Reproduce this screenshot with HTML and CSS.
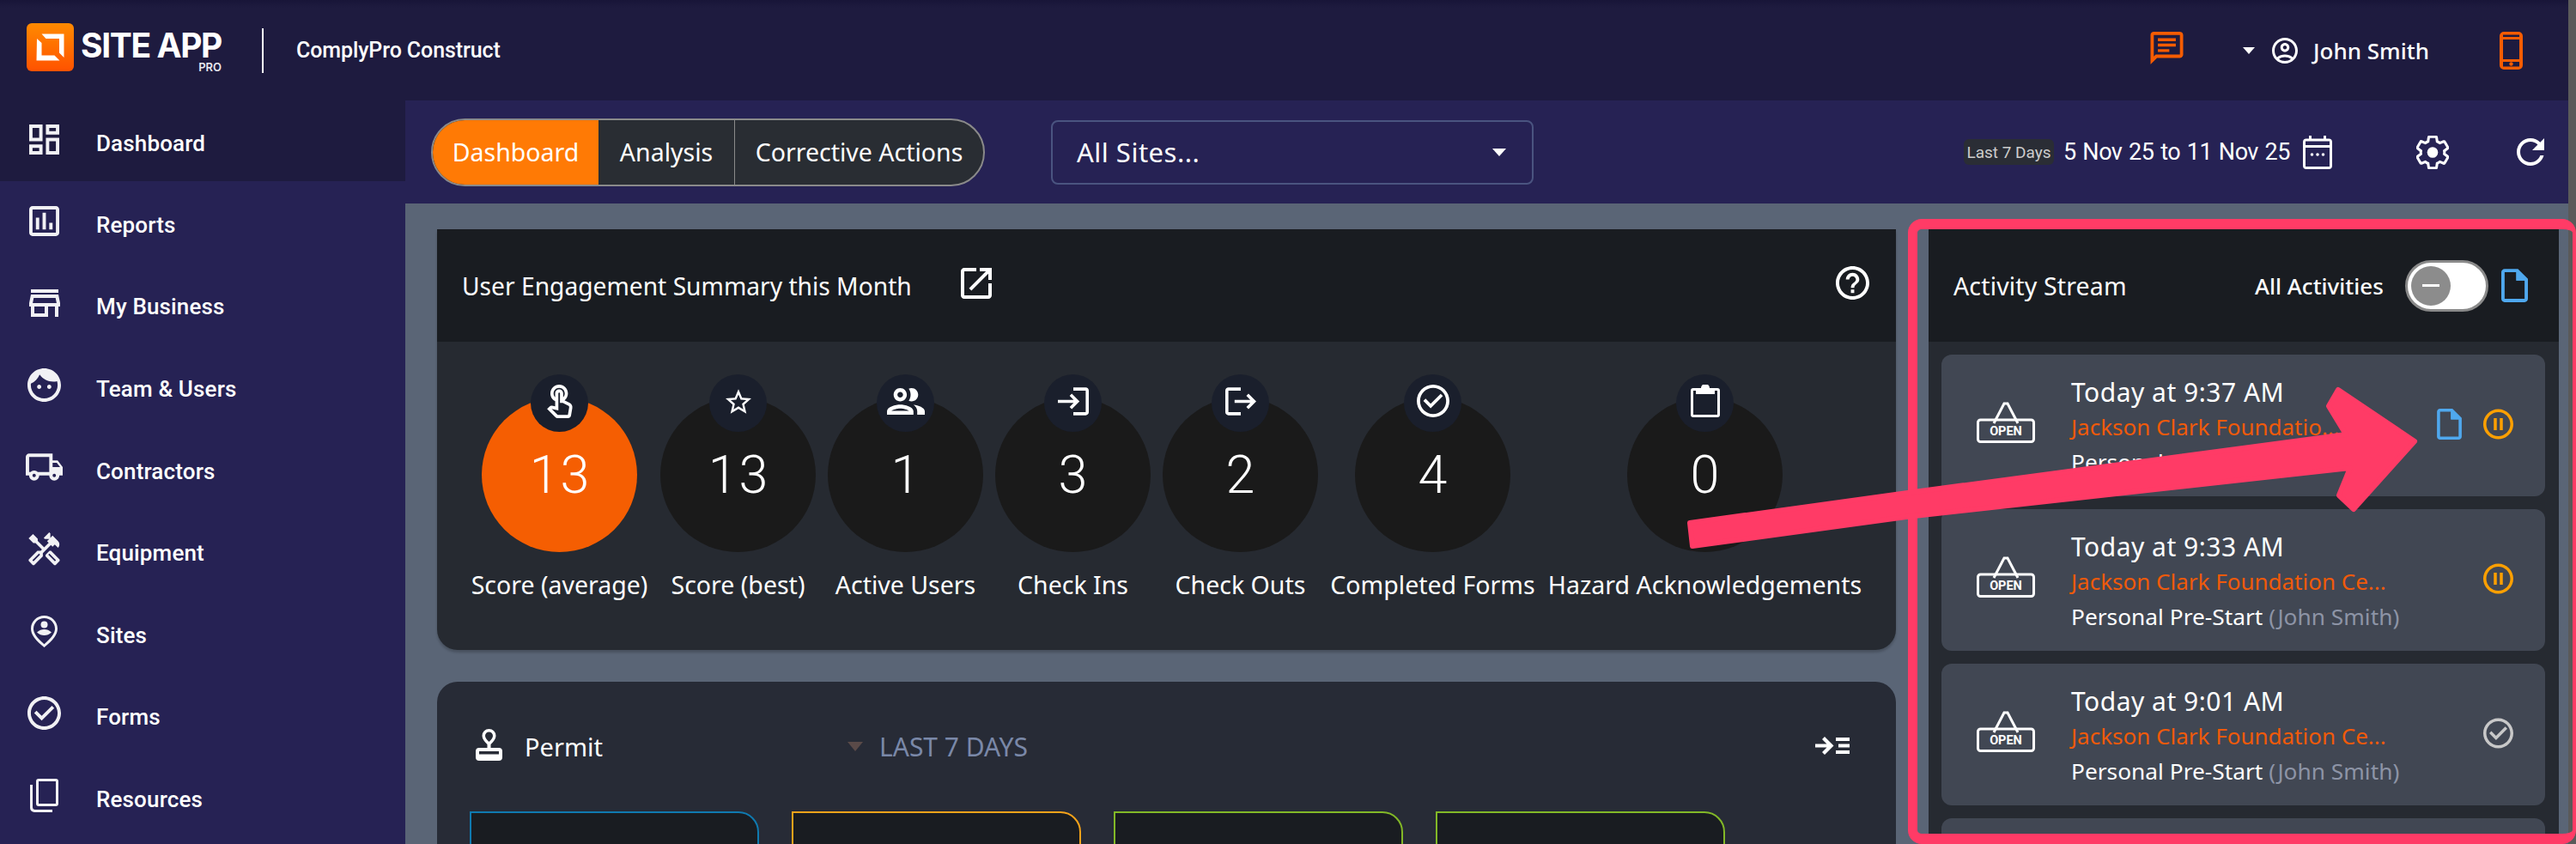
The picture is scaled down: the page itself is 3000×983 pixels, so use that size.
FILE: index.html
```html
<!DOCTYPE html>
<html lang="en">
<head>
<meta charset="utf-8">
<title>Site App Pro</title>
<link rel="stylesheet" href="styles.css">
</head>
<body>
<svg class="defs" width="0" height="0">
  <symbol id="doc" viewBox="4 2 16 20"><path d="M14 2H6c-1.1 0-1.99.9-1.99 2L4 20c0 1.1.89 2 1.99 2H18c1.1 0 2-.9 2-2V8l-6-6zM6 20V4h7v5h5v11H6z"/><path d="M13 3h1l5 5v1h-6z"/></symbol>
  <symbol id="pause" viewBox="2 2 20 20"><path d="M9 16h2V8H9v8zm3-14C6.48 2 2 6.48 2 12s4.48 10 10 10 10-4.48 10-10S17.52 2 12 2zm0 18c-4.41 0-8-3.59-8-8s3.59-8 8-8 8 3.59 8 8-3.59 8-8 8zm1-4h2V8h-2v8z"/></symbol>
  <symbol id="check" viewBox="2 2 20 20"><path d="M12 2C6.48 2 2 6.48 2 12s4.48 10 10 10 10-4.48 10-10S17.52 2 12 2zm0 18c-4.41 0-8-3.59-8-8s3.59-8 8-8 8 3.59 8 8-3.59 8-8 8z"/><path d="M16.6 8.6L10.5 14.7 7.4 11.6 6 13l4.5 4.5L18 10z" transform="translate(0 -1)"/></symbol>
</svg>

<div class="app">
  <header class="topbar">
    <svg class="logo-mark" viewBox="0 0 55 56">
      <defs><linearGradient id="lg" x1="0" y1="0" x2="0" y2="1"><stop offset="0" stop-color="#ff8a00"/><stop offset="1" stop-color="#ff5200"/></linearGradient></defs>
      <rect width="55" height="56" rx="6" fill="url(#lg)"/>
      <path d="M12 18l5.500 5v14.500h15l6 6H11.500z M17.500 12.500H43.500V40l-5.500-5.500V18H22.500z" fill="#fff"/>
    </svg>
    <div class="wordmark"><span class="wordmark-main">SITE APP</span><span class="wordmark-sub">PRO</span></div>
    <span class="top-divider"></span>
    <span class="company">ComplyPro Construct</span>
    <svg class="ic-chat" viewBox="2 2 20 20"><path d="M20 2H4c-1.100 0-2 .9-2 2v18l4-4h14c1.100 0 2-.9 2-2V4c0-1.100-.9-2-2-2zm0 14H5.170L4 17.170V4h16v12z"/><path d="M6.500 6h11v1.800h-11zM6.500 9.300h11v1.800h-11zM6.500 12.600h7v1.800h-7z"/></svg>
    <span class="top-caret"></span>
    <svg class="ic-user" viewBox="2 2 20 20"><path d="M12 2C6.480 2 2 6.480 2 12s4.480 10 10 10 10-4.480 10-10S17.520 2 12 2zM7.350 18.500C8.660 17.560 10.260 17 12 17s3.340.56 4.650 1.500c-1.310.94-2.910 1.500-4.650 1.500s-3.340-.56-4.650-1.500zm10.790-1.380C16.450 15.800 14.320 15 12 15s-4.450.8-6.140 2.120C4.700 15.730 4 13.950 4 12c0-4.420 3.580-8 8-8s8 3.580 8 8c0 1.950-.7 3.730-1.860 5.120z"/><path d="M12 6c-1.930 0-3.500 1.570-3.500 3.500S10.070 13 12 13s3.500-1.570 3.500-3.500S13.930 6 12 6zm0 5c-.83 0-1.500-.67-1.500-1.500S11.170 8 12 8s1.500.67 1.500 1.500S12.830 11 12 11z"/></svg>
    <span class="user-name">John Smith</span>
    <svg class="ic-phone" viewBox="0 0 27 44"><path fill-rule="evenodd" d="M5 0h17a5 5 0 015 5v34a5 5 0 01-5 5H5a5 5 0 01-5-5V5a5 5 0 015-5zM4 3.500V6h19V3.500zM4 9v23h19V9zM4 35v5.500h19V35z"/><circle cx="13.500" cy="37.500" r="2.200"/></svg>
  </header>

  <nav class="sidebar">
    <a class="nav-item active"><span class="nav-icon"><svg width="35" height="35" viewBox="3 3 18 18"><path d="M3 13h8V3H3v10zm2-8h4v6H5V5zm8 16h8V11h-8v10zm2-8h4v6h-4v-6zM13 3v6h8V3h-8zm6 4h-4V5h4v2zM3 21h8v-6H3v6zm2-4h4v2H5v-2z"/></svg></span>Dashboard</a>
    <a class="nav-item"><span class="nav-icon"><svg width="35" height="35" viewBox="3 3 18 18"><path d="M19 3H5c-1.100 0-2 .9-2 2v14c0 1.100.9 2 2 2h14c1.100 0 2-.9 2-2V5c0-1.100-.9-2-2-2zm0 16H5V5h14v14z"/><path d="M7 10h2v7H7zm4-3h2v10h-2zm4 6h2v4h-2z"/></svg></span>Reports</a>
    <a class="nav-item"><span class="nav-icon"><svg width="36" height="32" viewBox="3 4 18 16"><path d="M4 4h16v2H4zM21 14v-2l-1-5H4l-1 5v2h1v6h10v-6h4v6h2v-6h1zm-9 4H6v-4h6v4zm-6.960-6l.6-3h12.720l.6 3H5.040z"/></svg></span>My Business</a>
    <a class="nav-item"><span class="nav-icon"><svg width="39" height="39" viewBox="2 2 20 20"><path d="M9 11.750c-.69 0-1.250.56-1.250 1.250s.56 1.250 1.250 1.250 1.250-.56 1.250-1.250-.56-1.250-1.250-1.250zm6 0c-.69 0-1.250.56-1.250 1.250s.56 1.250 1.250 1.250 1.250-.56 1.250-1.250-.56-1.250-1.250-1.250zM12 2C6.480 2 2 6.480 2 12s4.480 10 10 10 10-4.480 10-10S17.520 2 12 2zm0 18c-4.410 0-8-3.590-8-8 0-.29.02-.58.05-.86 2.360-1.050 4.230-2.980 5.210-5.370C11.070 8.330 14.050 10 17.420 10c.78 0 1.530-.09 2.250-.26.21.71.33 1.470.33 2.260 0 4.410-3.590 8-8 8z"/></svg></span>Team &amp; Users</a>
    <a class="nav-item"><span class="nav-icon"><svg width="43" height="32" viewBox="1 4 22 16"><path d="M20 8h-3V4H3c-1.100 0-2 .9-2 2v11h2c0 1.660 1.340 3 3 3s3-1.340 3-3h6c0 1.660 1.340 3 3 3s3-1.340 3-3h2v-5l-3-4zm-.5 1.500l1.960 2.500H17V9.500h2.500zM6 18c-.55 0-1-.45-1-1s.45-1 1-1 1 .45 1 1-.45 1-1 1zm2.220-3c-.55-.61-1.330-1-2.220-1s-1.670.39-2.220 1H3V6h12v9H8.220zM18 18c-.55 0-1-.45-1-1s.45-1 1-1 1 .45 1 1-.45 1-1 1z"/></svg></span>Contractors</a>
    <a class="nav-item"><span class="nav-icon"><svg width="39" height="40" viewBox="2 1 20 22"><path d="M21.670 18.170l-5.300-5.300h-.99l-2.540 2.540v.99l5.300 5.300c.39.39 1.020.39 1.410 0l2.120-2.120c.39-.38.39-1.020 0-1.410zm-2.830 1.420l-4.240-4.240.71-.71 4.240 4.240-.71.71z"/><path d="M17.340 10.190l1.410-1.410 2.120 2.120c1.170-1.170 1.170-3.070 0-4.240l-3.540-3.540-1.410 1.410V1.710l-.7-.71-3.540 3.540.71.71h2.830l-1.410 1.410 1.060 1.060-2.890 2.890-4.130-4.130V5.060L4.830 2.040 2 4.870 5.030 7.900h1.410l4.130 4.130-.85.85H7.600l-5.300 5.300c-.39.39-.39 1.020 0 1.410l2.120 2.120c.39.39 1.020.39 1.410 0l5.300-5.300v-2.120l5.150-5.150 1.060 1.050zm-7.980 5.150l-4.240 4.240-.71-.71 4.240-4.240.71.71z"/></svg></span>Equipment</a>
    <a class="nav-item"><span class="nav-icon"><svg width="31" height="37" viewBox="0 0 31 37"><path fill-rule="evenodd" d="M15.500 0C7 0 0 6.700 0 15.200 0 22 5.500 29 15.500 37 25.500 29 31 22 31 15.200 31 6.700 24 0 15.500 0zm0 3C22.500 3 28 8.500 28 15.200c0 5-4 10.800-12.500 18C7 26 3 20.200 3 15.200 3 8.500 8.500 3 15.500 3z"/><circle cx="15.500" cy="10.500" r="4"/><path d="M7 19.500c2.500-2.500 5.500-3.500 8.500-3.500s6 1 8.500 3.500c-2.500 2.500-5.500 3.500-8.500 3.500S9.500 22 7 19.500z"/></svg></span>Sites</a>
    <a class="nav-item"><span class="nav-icon"><svg width="39" height="39"><use href="#check"/></svg></span>Forms</a>
    <a class="nav-item"><span class="nav-icon"><svg width="33" height="39" viewBox="0 0 33 39"><path fill-rule="evenodd" d="M10 0h20a3 3 0 013 3v26a3 3 0 01-3 3H10a3 3 0 01-3-3V3a3 3 0 013-3zm0 3v26h20V3z"/><path d="M0 7h3v26a3 3 0 003 3h20v3H5a5 5 0 01-5-5z"/></svg></span>Resources</a>
  </nav>

  <main class="main">
    <div class="toolbar">
      <div class="tabs">
        <span class="tab tab-active">Dashboard</span>
        <span class="tab tab-analysis">Analysis</span>
        <span class="tab tab-actions">Corrective Actions</span>
      </div>
      <div class="site-select"><span>All Sites...</span><span class="select-caret"></span></div>
      <span class="range-badge">Last 7 Days</span>
      <span class="range-text">5 Nov 25 to 11 Nov 25</span>
      <svg class="ic-cal" viewBox="0 0 34 39"><path fill-rule="evenodd" d="M7 0h3v3.500h14V0h3v3.500h3a4 4 0 014 4V35a4 4 0 01-4 4H4a4 4 0 01-4-4V7.500a4 4 0 014-4h3zM3 6.500V11h28V6.500zM3 14v22h28V14z"/><circle cx="10.500" cy="22" r="1.800"/><circle cx="17" cy="22" r="1.800"/><circle cx="23.500" cy="22" r="1.800"/></svg>
      <svg class="ic-gear" viewBox="2.500 1.800 19 20.400"><path fill="none" stroke="#fff" stroke-width="1.600" d="M19.140 12.940c.04-.3.06-.61.06-.94 0-.32-.02-.64-.07-.94l2.030-1.580c.18-.14.23-.41.12-.61l-1.920-3.320c-.12-.22-.37-.29-.59-.22l-2.390.96c-.5-.38-1.030-.7-1.620-.94l-.36-2.540c-.04-.24-.24-.41-.48-.41h-3.840c-.24 0-.43.17-.47.41l-.36 2.540c-.59.24-1.130.57-1.620.94l-2.390-.96c-.22-.08-.47 0-.59.22L2.740 8.870c-.12.21-.08.47.12.61l2.030 1.580c-.05.3-.09.63-.09.94s.02.64.07.94l-2.030 1.580c-.18.14-.23.41-.12.61l1.920 3.320c.12.22.37.29.59.22l2.390-.96c.5.38 1.030.7 1.620.94l.36 2.540c.05.24.24.41.48.41h3.840c.24 0 .44-.17.47-.41l.36-2.540c.59-.24 1.130-.56 1.620-.94l2.390.96c.22.08.47 0 .59-.22l1.920-3.320c.12-.22.07-.47-.12-.61l-2.010-1.580z"/><circle cx="12" cy="12" r="3.300" fill="#fff"/></svg>
      <svg class="ic-refresh" viewBox="4 4 16 16"><path d="M17.650 6.350C16.200 4.900 14.210 4 12 4c-4.420 0-7.990 3.580-7.990 8s3.570 8 7.990 8c3.730 0 6.840-2.550 7.730-6h-2.080c-.82 2.330-3.040 4-5.650 4-3.310 0-6-2.690-6-6s2.690-6 6-6c1.660 0 3.140.69 4.220 1.780L13 11h7V4l-2.350 2.350z"/></svg>
    </div>

    <div class="content">
      <div class="col-left">
        <section class="card summary">
          <div class="card-head">
            <span class="card-title">User Engagement Summary this Month</span>
            <svg class="ic-open" viewBox="3 3 18 18"><path d="M19 19H5V5h7V3H5c-1.110 0-2 .9-2 2v14c0 1.100.89 2 2 2h14c1.100 0 2-.9 2-2v-7h-2v7zM14 3v2h3.590l-9.830 9.830 1.410 1.410L19 6.410V10h2V3h-7z"/></svg>
            <svg class="ic-help" viewBox="2 2 20 20"><path d="M11 18h2v-2h-2v2zm1-16C6.480 2 2 6.480 2 12s4.480 10 10 10 10-4.480 10-10S17.520 2 12 2zm0 18c-4.410 0-8-3.590-8-8s3.590-8 8-8 8 3.590 8 8-3.590 8-8 8zm0-14c-2.210 0-4 1.790-4 4h2c0-1.100.9-2 2-2s2 .9 2 2c0 2-3 1.750-3 5h2c0-2.250 3-2.500 3-5 0-2.210-1.790-4-4-4z"/></svg>
          </div>
          <div class="stats">
            <div class="stat">
              <span class="stat-badge"><svg width="30" height="39" viewBox="4 1 16 21"><path d="M18.190 12.440l-3.240-1.620c1.290-1 2.120-2.560 2.120-4.320 0-3.030-2.470-5.500-5.500-5.500s-5.500 2.470-5.500 5.500c0 2.130 1.220 3.980 3 4.890v3.260c-2.150-.46-2.020-.44-2.260-.44-.53 0-1.030.21-1.410.59L4 16.220l5.090 5.090C9.520 21.750 10.120 22 10.740 22h6.300c.98 0 1.810-.7 1.970-1.670l.8-4.710c.22-1.300-.43-2.580-1.620-3.180zm-.35 2.850l-.8 4.710h-6.300c-.09 0-.17-.04-.24-.1l-3.680-3.680 4.250.89V6.500c0-.28.22-.5.5-.5s.5.22.5.5v6h1.760l3.460 1.730c.4.2.62.63.55 1.060zM8.070 6.500c0-1.930 1.570-3.500 3.500-3.500s3.500 1.570 3.500 3.500c0 .95-.38 1.810-1 2.440V6.500c0-1.380-1.120-2.500-2.500-2.500s-2.500 1.120-2.500 2.500v2.440c-.62-.63-1-1.490-1-2.440z"/></svg></span>
              <span class="stat-num stat-hot">13</span>
              <span class="stat-label">Score (average)</span>
            </div>
            <div class="stat">
              <span class="stat-badge"><svg width="30" height="29" viewBox="2 2 20 19"><path d="M22 9.240l-7.190-.62L12 2 9.190 8.630 2 9.240l5.460 4.730L5.820 21 12 17.270 18.180 21l-1.630-7.030L22 9.240zM12 15.400l-3.760 2.270 1-4.280-3.320-2.880 4.380-.38L12 6.100l1.710 4.040 4.380.38-3.320 2.880 1 4.280L12 15.400z"/></svg></span>
              <span class="stat-num">13</span>
              <span class="stat-label">Score (best)</span>
            </div>
            <div class="stat">
              <span class="stat-badge"><svg width="44" height="31" viewBox="2 5 20 14"><path d="M9 13.750c-2.340 0-7 1.170-7 3.500V19h14v-1.750c0-2.330-4.660-3.500-7-3.500zM4.340 17c.84-.58 2.870-1.250 4.660-1.250s3.820.67 4.660 1.250H4.340zM9 12c1.930 0 3.500-1.570 3.500-3.500S10.930 5 9 5 5.500 6.570 5.500 8.500 7.070 12 9 12zm0-5c.83 0 1.500.67 1.500 1.500S9.830 10 9 10s-1.500-.67-1.500-1.500S8.170 7 9 7zm7.040 6.810c1.160.84 1.960 1.960 1.960 3.440V19h4v-1.750c0-2.020-3.500-3.170-5.960-3.440zM15 12c1.930 0 3.500-1.570 3.500-3.500S16.930 5 15 5c-.54 0-1.040.13-1.500.35.63.89 1 1.980 1 3.150s-.37 2.260-1 3.150c.46.22.96.35 1.500.35z"/></svg></span>
              <span class="stat-num">1</span>
              <span class="stat-label">Active Users</span>
            </div>
            <div class="stat">
              <span class="stat-badge"><svg width="36" height="33" viewBox="2 3 20 18"><path d="M11 7L9.600 8.400l2.600 2.600H2v2h10.200l-2.600 2.600L11 17l5-5-5-5zm9 12h-8v2h8c1.100 0 2-.9 2-2V5c0-1.100-.9-2-2-2h-8v2h8v14z"/></svg></span>
              <span class="stat-num">3</span>
              <span class="stat-label">Check Ins</span>
            </div>
            <div class="stat">
              <span class="stat-badge"><svg width="36" height="33" viewBox="2 3 20 18"><path d="M17 7l-1.410 1.410L18.170 11H8v2h10.170l-2.580 2.580L17 17l5-5zM4 5h8V3H4c-1.100 0-2 .9-2 2v14c0 1.100.9 2 2 2h8v-2H4V5z"/></svg></span>
              <span class="stat-num">2</span>
              <span class="stat-label">Check Outs</span>
            </div>
            <div class="stat">
              <span class="stat-badge"><svg width="38" height="38"><use href="#check"/></svg></span>
              <span class="stat-num">4</span>
              <span class="stat-label">Completed Forms</span>
            </div>
            <div class="stat">
              <span class="stat-badge"><svg width="34" height="38" viewBox="0 0 34 38"><path fill-rule="evenodd" d="M3 4h9a5 5 0 0110 0h9a3 3 0 013 3v28a3 3 0 01-3 3H3a3 3 0 01-3-3V7a3 3 0 013-3zm0 3v28h28V7h-3v4H6V7z"/></svg></span>
              <span class="stat-num">0</span>
              <span class="stat-label">Hazard Acknowledgements</span>
            </div>
          </div>
        </section>

        <section class="card permit">
          <div class="permit-head">
            <svg class="ic-stamp" viewBox="0 0 31 37"><path fill-rule="evenodd" d="M15.500 0a8 8 0 018 8c0 3.500-2.500 6.500-6 10v4H27a4 4 0 014 4v7a4 4 0 01-4 4H4a4 4 0 01-4-4v-7a4 4 0 014-4h9.500v-4C10 14.500 7.500 11.500 7.500 8a8 8 0 018-8zm0 3.500a4.500 4.500 0 00-4.500 4.500c0 2 1.500 4 4.500 7 3-3 4.500-5 4.500-7a4.500 4.500 0 00-4.500-4.500zM4 26v3.500h23V26z"/></svg>
            <span class="permit-title">Permit</span>
            <span class="range-caret"></span>
            <span class="range-label">LAST 7 DAYS</span>
            <svg class="ic-indent" viewBox="0 0 40 21"><path d="M11 0l-3 3 5.500 5.500H0v4h13.500L8 18l3 3 10.500-10.500zM24 1h16v4H24zM27 8.500h13v4H27zM24 16h16v4H24z"/></svg>
          </div>
          <div class="tiles">
            <div class="tile tile-blue"></div>
            <div class="tile tile-amber"></div>
            <div class="tile tile-green"></div>
            <div class="tile tile-green"></div>
          </div>
        </section>
      </div>

      <aside class="stream">
        <div class="stream-head">
          <span class="stream-title">Activity Stream</span>
          <span class="stream-filter">All Activities</span>
          <span class="toggle"><span class="knob"><span class="knob-dash"></span></span></span>
          <svg class="ic-doc ic-doc-head"><use href="#doc"/></svg>
        </div>
        <div class="stream-list">
          <article class="activity">
            <svg class="open-sign" viewBox="0 0 68 49"><path d="M20 26L32 3h4l12 23" fill="none" stroke="#fff" stroke-width="3"/><rect x="1.500" y="22" width="65" height="25.500" rx="3" fill="none" stroke="#fff" stroke-width="3"/><text x="34" y="40" text-anchor="middle" class="open-text">OPEN</text></svg>
            <div class="activity-text">
              <div class="activity-time">Today at 9:37 AM</div>
              <div class="activity-site">Jackson Clark Foundatio...</div>
              <div class="activity-form">Personal Pre-Start <span class="activity-user">(John S...</span></div>
            </div>
            <div class="activity-icons">
              <svg class="ic-doc"><use href="#doc"/></svg>
              <svg class="ic-pause"><use href="#pause"/></svg>
            </div>
          </article>
          <article class="activity">
            <svg class="open-sign" viewBox="0 0 68 49"><path d="M20 26L32 3h4l12 23" fill="none" stroke="#fff" stroke-width="3"/><rect x="1.500" y="22" width="65" height="25.500" rx="3" fill="none" stroke="#fff" stroke-width="3"/><text x="34" y="40" text-anchor="middle" class="open-text">OPEN</text></svg>
            <div class="activity-text">
              <div class="activity-time">Today at 9:33 AM</div>
              <div class="activity-site">Jackson Clark Foundation Ce...</div>
              <div class="activity-form">Personal Pre-Start <span class="activity-user">(John Smith)</span></div>
            </div>
            <div class="activity-icons">
              <svg class="ic-pause"><use href="#pause"/></svg>
            </div>
          </article>
          <article class="activity">
            <svg class="open-sign" viewBox="0 0 68 49"><path d="M20 26L32 3h4l12 23" fill="none" stroke="#fff" stroke-width="3"/><rect x="1.500" y="22" width="65" height="25.500" rx="3" fill="none" stroke="#fff" stroke-width="3"/><text x="34" y="40" text-anchor="middle" class="open-text">OPEN</text></svg>
            <div class="activity-text">
              <div class="activity-time">Today at 9:01 AM</div>
              <div class="activity-site">Jackson Clark Foundation Ce...</div>
              <div class="activity-form">Personal Pre-Start <span class="activity-user">(John Smith)</span></div>
            </div>
            <div class="activity-icons">
              <svg class="ic-done"><use href="#check"/></svg>
            </div>
          </article>
          <article class="activity"></article>
        </div>
      </aside>
    </div>
  </main>
</div>

<div class="annot-frame"></div>
<svg class="annot-arrow" viewBox="0 0 3000 983"><path d="M1968 609L2229 573 2732 506 2712 473 2723 454 2812 514 2741 593 2724 577 2737 545 2220 602 1971 636z"/></svg>
</body>
</html>
```
FILE: styles.css
```css
* { box-sizing: border-box; }
html, body { margin: 0; height: 983px; overflow: hidden; }
body {
  position: relative;
  background: #5a5a5a;
  font-family: Roboto, "Liberation Sans", sans-serif;
  color: #fff;
}
svg { fill: #fff; flex: none; display: block; }
.defs { position: absolute; }

.app {
  width: 2991px;
  height: 983px;
  display: grid;
  grid-template-columns: 472px 1fr;
  grid-template-rows: 117px 866px;
}

/* top bar */
.topbar {
  grid-column: 1 / 3;
  display: flex;
  align-items: center;
  padding: 0 53px 0 31px;
  background: linear-gradient(#181538 0, #1e1b3f 9px);
}
.logo-mark { width: 55px; height: 56px; margin-top: -8px; }
.wordmark { display: flex; flex-direction: column; align-items: flex-end; margin-left: 8px; width: 164px; margin-top: 3px; }
.wordmark-main { font: 700 39px/34px Inter, sans-serif; letter-spacing: -1.400px; white-space: nowrap; }
.wordmark-sub { font: 600 13px/13px Inter, sans-serif; color: #e8e8ee; margin-top: 2px; }
.top-divider { width: 2px; height: 52px; background: #fff; margin-left: 47px; }
.company { font-size: 25px; font-weight: 500; margin-left: 38px; letter-spacing: -.1px; white-space: nowrap; }
.ic-chat { width: 39px; height: 38px; fill: #f65c02; margin-left: auto; margin-top: -5px; }
.top-caret { width: 0; height: 0; border: 7px solid transparent; border-top: 8px solid #fff; border-bottom: 0; margin-left: 69px; }
.ic-user { width: 30px; height: 30px; margin-left: 20px; }
.user-name { font: 500 26px "Noto Sans", sans-serif; margin-left: 18px; width: 135px; white-space: nowrap; }
.ic-phone { width: 27px; height: 44px; fill: #f65c02; margin-left: 82px; }

/* sidebar */
.sidebar { background: #262254; display: flex; flex-direction: column; }
.nav-item {
  height: 95.600px;
  padding-top: 6px;
  display: flex;
  align-items: center;
  font-size: 26px;
  font-weight: 500;
  letter-spacing: .15px;
}
.nav-item.active { height: 94px; background: #1e1b3f; }
.nav-icon { width: 103px; margin-right: 9px; display: flex; justify-content: center; margin-bottom: 9px; }
.nav-icon svg { fill: #f1f1f4; }

/* main */
.main { display: flex; flex-direction: column; min-width: 0; background: #5a6576; overflow: hidden; }
.toolbar {
  height: 120px;
  flex: none;
  display: flex;
  align-items: center;
  padding: 0 28px 0 30px;
  background: #262254;
}
.tabs {
  display: flex;
  width: 645px;
  height: 79px;
  border: 2px solid #8a8a8a;
  border-radius: 40px;
  overflow: hidden;
  background: #292d33;
  font: 400 28.500px "Noto Sans", sans-serif;
}
.tab { display: flex; align-items: center; justify-content: center; white-space: nowrap; }
.tab-active { width: 193px; background: #ff7a05; }
.tab-analysis { width: 158px; }
.tab-actions { flex: 1; border-left: 1px solid #8a8a8a; }
.site-select {
  width: 562px;
  height: 75px;
  margin-left: 77px;
  padding: 0 30px 0 28px;
  display: flex;
  align-items: center;
  justify-content: space-between;
  border: 2px solid #4a5480;
  border-radius: 8px;
  font: 400 31px "Noto Sans", sans-serif;
  letter-spacing: .5px;
}
.select-caret { width: 0; height: 0; border: 8px solid transparent; border-top: 9px solid #fff; border-bottom: 0; }
.range-badge {
  margin-left: auto;
  width: 105px;
  height: 30px;
  display: flex;
  align-items: center;
  justify-content: center;
  background: #2a2d35;
  border-radius: 6px;
  color: #ccc;
  font-size: 19px;
  white-space: nowrap;
}
.range-text { font-size: 27px; letter-spacing: -.5px; word-spacing: 1.500px; margin-left: 11px; width: 263px; white-space: nowrap; }
.ic-cal { width: 34px; height: 39px; margin-left: 16px; }
.ic-gear { width: 38px; height: 39px; margin-left: 98px; }
.ic-refresh { width: 32px; height: 32px; margin-left: 79px; }

.content { flex: 1; min-height: 0; display: flex; gap: 38px; padding: 30px 11px 0 37px; }
.col-left { width: 1699px; flex: none; display: flex; flex-direction: column; gap: 37px; }
.card { background: #262a31; }
.summary { height: 490px; flex: none; border-radius: 0 0 24px 24px; box-shadow: 0 3px 3px rgba(0,0,0,.2); }
.card-head { height: 131px; display: flex; align-items: center; padding: 0 31px 0 29px; background: #191c21; font: 400 28.200px "Noto Sans", sans-serif; }
.card-title { width: 524px; white-space: nowrap; }
.ic-open { width: 36px; height: 36px; margin-left: 57px; margin-top: -6px; }
.ic-help { width: 39px; height: 39px; margin-left: auto; margin-top: -6px; }

.stats {
  display: grid;
  grid-template-columns: 207px 181px 181px 181px 181px 239px 367px;
  gap: 14px;
  padding: 38px 0 0 39px;
}
.stat { display: flex; flex-direction: column; align-items: center; }
.stat-badge {
  position: relative;
  z-index: 1;
  width: 67px;
  height: 67px;
  border-radius: 50%;
  background: #1a1f2c;
  display: flex;
  align-items: center;
  justify-content: center;
  padding-bottom: 5px;
}
.stat-num {
  width: 181px;
  height: 180px;
  margin-top: -40px;
  padding-left: 2px;
  border-radius: 50%;
  background: #1a1a1a;
  display: flex;
  align-items: center;
  justify-content: center;
  font-size: 61px;
  font-weight: 300;
  letter-spacing: 2px;
}
.stat-hot { background: #f55e02; }
.stat-label { margin-top: 18px; font: 400 28.500px/40px "Noto Sans", sans-serif; white-space: nowrap; }

.permit { flex: 1; min-height: 0; background: #272b36; border-radius: 24px 24px 0 0; }
.permit-head { height: 151px; display: flex; align-items: center; padding: 0 54px 0 45px; }
.ic-stamp { width: 31px; height: 37px; margin-top: -4px; }
.permit-title { font: 400 29px "Noto Sans", sans-serif; margin-left: 26px; width: 376px; white-space: nowrap; }
.range-caret { width: 0; height: 0; border: 9px solid transparent; border-top: 11px solid #5a4a48; border-bottom: 0; }
.range-label { font: 400 30px "Noto Sans", sans-serif; color: #7a88a8; margin-left: 19px; white-space: nowrap; }
.ic-indent { width: 40px; height: 21px; margin-left: auto; margin-top: -2px; }
.tiles { display: flex; gap: 38px; padding-left: 38px; }
.tile { width: 337px; height: 200px; background: #191c21; border: 2px solid; border-radius: 0 24px 0 0; }
.tile-blue { border-color: #0f7ab0; }
.tile-amber { border-color: #f5a31a; }
.tile-green { border-color: #82b827; }

/* stream */
.stream { width: 734px; flex: none; background: #262a31; display: flex; flex-direction: column; }
.stream-head { height: 131px; flex: none; display: flex; align-items: center; padding: 0 36px 0 29px; background: #191c21; }
.stream-title { font: 400 28.500px "Noto Sans", sans-serif; letter-spacing: .15px; white-space: nowrap; }
.stream-filter { margin-left: auto; font: 500 26px "Noto Sans", sans-serif; width: 152px; white-space: nowrap; }
.toggle {
  width: 97px;
  height: 60px;
  margin-left: 23px;
  padding-left: 4px;
  display: flex;
  align-items: center;
  background: #fff;
  border: 3px solid #8a8a8a;
  border-radius: 30px;
}
.knob { width: 46px; height: 46px; border-radius: 50%; background: #8c8c8c; display: flex; align-items: center; justify-content: center; }
.knob-dash { width: 20px; height: 3px; background: #fff; }
.ic-doc { width: 29px; height: 36px; fill: #4fa8ee; }
.ic-doc-head { width: 31px; height: 39px; margin-left: 15px; }
.stream-list { padding: 15px 16px 0 15px; display: flex; flex-direction: column; gap: 15px; }
.activity {
  height: 165px;
  flex: none;
  display: flex;
  align-items: flex-start;
  padding: 23px 37px 0 41px;
  background: #414753;
  border-radius: 12px;
}
.open-sign { width: 68px; height: 49px; margin-top: 31px; }
.open-text { font: 700 14.500px Roboto, sans-serif; fill: #fff; }
.activity-text { margin-left: 42px; flex: 1; min-width: 0; white-space: nowrap; font-family: "Noto Sans", sans-serif; }
.activity-time { font-size: 30px; line-height: 41px; letter-spacing: .5px; }
.activity-site { font-size: 26px; line-height: 41px; color: #f05a0a; }
.activity-form { font-size: 26.300px; line-height: 41px; }
.activity-user { color: #8d94a6; }
.activity-icons { display: flex; align-items: center; gap: 25px; margin-top: 40px; }
.ic-pause, .ic-done { width: 35px; height: 36px; }
.ic-pause { fill: #ffa000; }
.ic-done { fill: #c8c8c8; }

/* annotation drawn over the screenshot */
.annot-frame {
  position: absolute;
  left: 2222px;
  top: 255px;
  right: 0;
  bottom: 0;
  border: 12px solid #ff3b66;
  border-width: 12px 4px 12px 11px;
  border-radius: 16px;
}
.annot-arrow { position: absolute; left: 0; top: 0; width: 3000px; height: 983px; fill: #ff3b66; stroke: #ff3b66; stroke-width: 6px; stroke-linejoin: round; pointer-events: none; }
```
